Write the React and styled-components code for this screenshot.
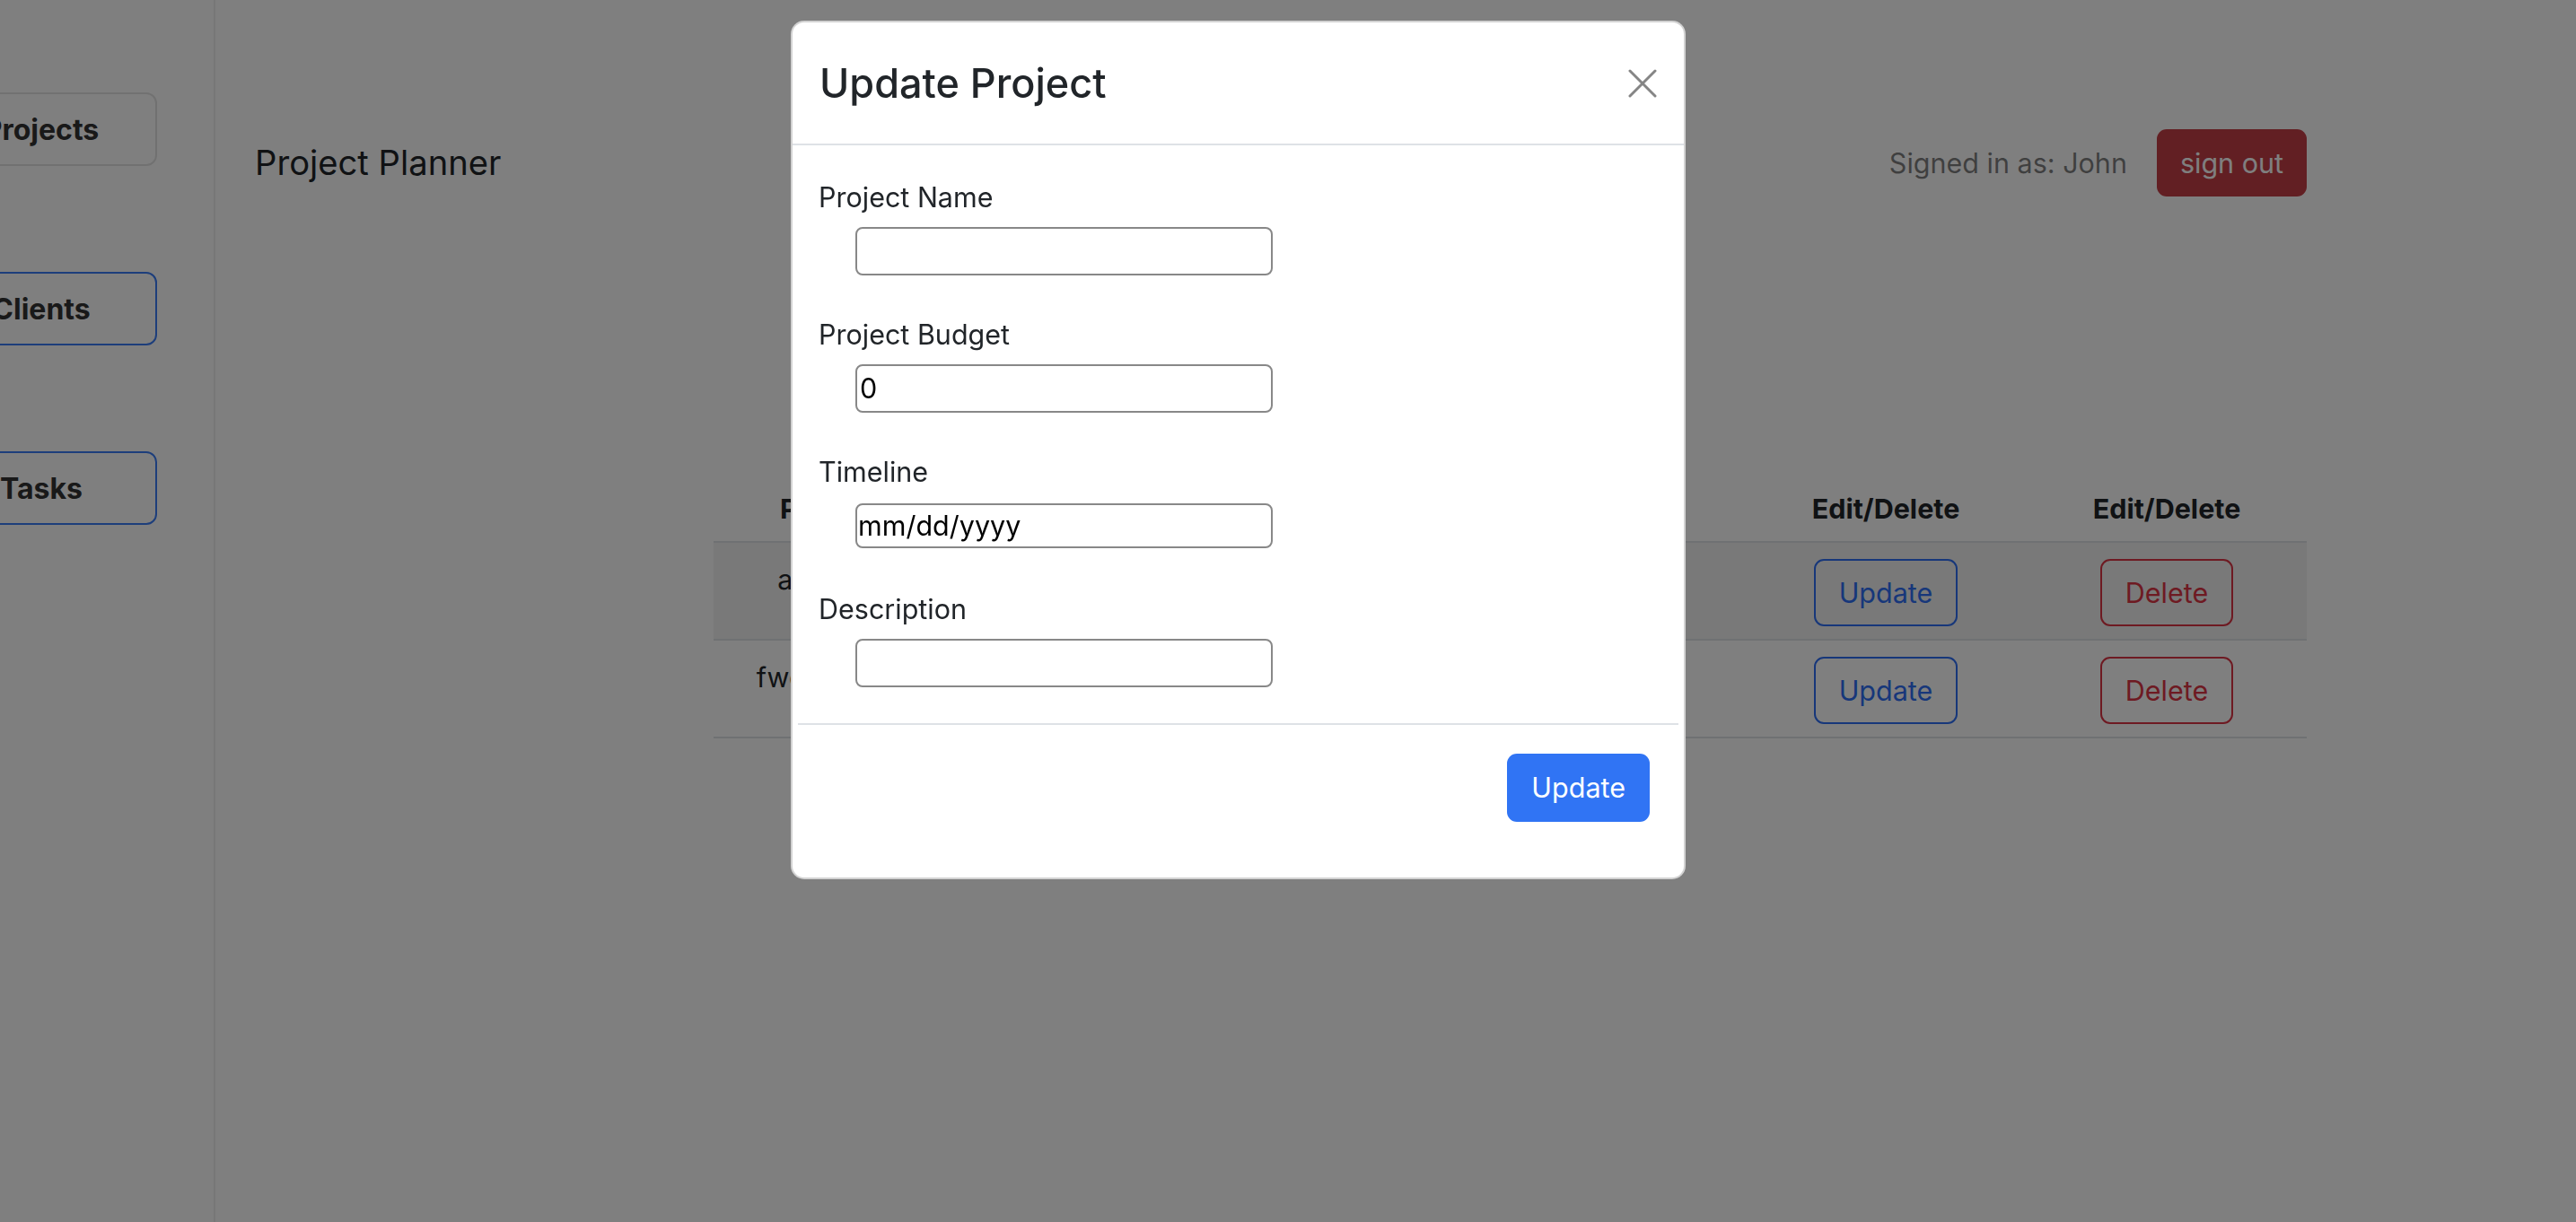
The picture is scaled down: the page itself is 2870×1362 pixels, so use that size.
import React from 'react';
import styled, { createGlobalStyle } from 'styled-components';

const GlobalStyle = createGlobalStyle`
  html, body { margin: 0; padding: 0; }
  body {
    font-family: Inter, "Noto Sans", sans-serif;
    background: #ffffff;
    color: #212529;
    overflow: hidden;
  }
  *, *::before, *::after { box-sizing: border-box; }
`;

const Layout = styled.div`
  display: flex;
  width: 2870px;
  height: 1362px;
  overflow: hidden;
`;

const Sidebar = styled.aside`
  flex: 0 0 240px;
  border-right: 2px solid #efefef;
  display: flex;
  flex-direction: column;
  gap: 118px;
  padding-top: 103px;
`;

const NavButton = styled.button`
  width: 258px;
  height: 82px;
  margin-left: -83px;
  border-radius: 12px;
  background: transparent;
  border: 2px solid ${(p) => (p.$accent ? '#3b7cf7' : '#e3e3e3')};
  font: 700 32px/45px Inter, sans-serif;
  color: #333;
  padding: 0;
`;

const Main = styled.main`
  flex: 1;
  display: flex;
  flex-direction: column;
  padding: 144px 300px 0 44px;
`;

const Navbar = styled.header`
  display: flex;
  align-items: center;
  justify-content: space-between;
`;

const Brand = styled.div`
  font: 400 38.2px/1.5 Inter, sans-serif;
  color: #212529;
`;

const UserArea = styled.div`
  display: flex;
  align-items: center;
  gap: 33px;
`;

const SignedIn = styled.span`
  font: 400 30.5px/45px Inter, sans-serif;
  color: rgba(0, 0, 0, 0.5);
`;

const DangerButton = styled.button`
  height: 75px;
  padding: 0 26px;
  border: none;
  border-radius: 11px;
  background: #c43e46;
  color: #fff;
  font: 400 30.5px/45px Inter, sans-serif;
`;

const Table = styled.div`
  align-self: flex-end;
  width: 1775px;
  margin-top: 309px;
`;

const Row = styled.div`
  display: grid;
  grid-template-columns: 348px 400px 401px 314px 312px;
  border-bottom: 2px solid #dee2e6;
  background: ${(p) => (p.$striped ? 'rgba(0,0,0,0.05)' : 'transparent')};
`;

const Cell = styled.div`
  padding: ${(p) => (p.$head ? '16px 16px 14px' : '18px 16px 14px')};
  text-align: center;
  font: ${(p) => (p.$head ? 700 : 400)} 30.5px/45px Inter, sans-serif;
  color: #212529;
  white-space: nowrap;
`;

const OutlineButton = styled.button`
  height: 75px;
  padding: 0 26px;
  background: transparent;
  border: 2px solid ${(p) => (p.$danger ? '#dc3545' : '#2f6ff5')};
  color: ${(p) => (p.$danger ? '#dc3545' : '#2f6ff5')};
  border-radius: 11px;
  font: 400 30.5px/45px Inter, sans-serif;
`;

const Backdrop = styled.div`
  position: fixed;
  inset: 0;
  background: rgba(0, 0, 0, 0.5);
  z-index: 10;
`;

const Dialog = styled.div`
  position: fixed;
  top: 23px;
  left: 881px;
  width: 997px;
  background: #fff;
  border: 2px solid rgba(0, 0, 0, 0.175);
  border-radius: 15px;
  z-index: 11;
  display: flex;
  flex-direction: column;
`;

const ModalHeader = styled.div`
  display: flex;
  align-items: center;
  justify-content: space-between;
  padding: 42px 30px 40px 30px;
  border-bottom: 2px solid #dee2e6;
`;

const ModalTitle = styled.h4`
  margin: 0;
  font: 500 45px/52.8px Inter, sans-serif;
  color: #212529;
`;

const CloseButton = styled.button`
  width: 32px;
  height: 32px;
  padding: 0;
  border: none;
  background: transparent;
  display: flex;
`;

const ModalBody = styled.form`
  padding: 35px 29px 32px 29px;
  display: flex;
  flex-direction: column;
`;

const FieldGroup = styled.div`
  display: flex;
  flex-direction: column;
  & + & { margin-top: 43px; }
`;

const Label = styled.label`
  font: 400 30.5px/45px Inter, sans-serif;
  color: #212529;
`;

const Input = styled.input`
  margin: ${(p) => (p.$date ? '13px 0 2px 41px' : '11px 0 0 41px')};
  width: 465px;
  height: ${(p) => (p.$date ? 50 : 54)}px;
  border: 2px solid #888;
  border-radius: 8px;
  background: #fff;
  padding: 0 0 0 ${(p) => (p.$date ? 1 : 3)}px;
  font: 400 30.5px Inter, sans-serif;
  color: #000;
  outline: none;
`;

const ModalFooter = styled.div`
  margin: 40px -23px 0;
  border-top: 2px solid #dee2e6;
  padding: 32px 32px 30px;
  display: flex;
  justify-content: flex-end;
`;

const PrimaryButton = styled.button`
  height: 76px;
  padding: 0 27px;
  border: none;
  border-radius: 11px;
  background: #3074f4;
  color: #fff;
  font: 400 30.5px/45px Inter, sans-serif;
`;

const rows = [
  { name: 'asdfasdfasdfa', budget: '1000', timeline: '2023-05-01' },
  { name: 'fwefwefwefwefw', budget: '500', timeline: '2023-06-12' },
];

const CloseIcon = () => (
  <svg width="32" height="32" viewBox="0 0 32 32">
    <path d="M2 2 L30 30 M30 2 L2 30" stroke="#858585" strokeWidth="3" strokeLinecap="round" />
  </svg>
);

export default function App() {
  return (
    <>
      <GlobalStyle />
      <Layout>
        <Sidebar>
          <NavButton>Projects</NavButton>
          <NavButton $accent>Clients</NavButton>
          <NavButton $accent>Tasks</NavButton>
        </Sidebar>
        <Main>
          <Navbar>
            <Brand>Project Planner</Brand>
            <UserArea>
              <SignedIn>Signed in as: John</SignedIn>
              <DangerButton>sign out</DangerButton>
            </UserArea>
          </Navbar>
          <Table>
            <Row>
              <Cell $head>Project Name</Cell>
              <Cell $head>Budget</Cell>
              <Cell $head>Timeline</Cell>
              <Cell $head>Edit/Delete</Cell>
              <Cell $head>Edit/Delete</Cell>
            </Row>
            {rows.map((r, i) => (
              <Row key={i} $striped={i % 2 === 0}>
                <Cell>{r.name}</Cell>
                <Cell>{r.budget}</Cell>
                <Cell>{r.timeline}</Cell>
                <Cell>
                  <OutlineButton>Update</OutlineButton>
                </Cell>
                <Cell>
                  <OutlineButton $danger>Delete</OutlineButton>
                </Cell>
              </Row>
            ))}
          </Table>
        </Main>
      </Layout>
      <Backdrop />
      <Dialog>
        <ModalHeader>
          <ModalTitle>Update Project</ModalTitle>
          <CloseButton aria-label="Close">
            <CloseIcon />
          </CloseButton>
        </ModalHeader>
        <ModalBody onSubmit={(e) => e.preventDefault()}>
          <FieldGroup>
            <Label>Project Name</Label>
            <Input type="text" defaultValue="" />
          </FieldGroup>
          <FieldGroup>
            <Label>Project Budget</Label>
            <Input type="text" defaultValue="0" />
          </FieldGroup>
          <FieldGroup>
            <Label>Timeline</Label>
            <Input type="text" $date defaultValue="mm/dd/yyyy" />
          </FieldGroup>
          <FieldGroup>
            <Label>Description</Label>
            <Input type="text" defaultValue="" />
          </FieldGroup>
          <ModalFooter>
            <PrimaryButton type="submit">Update</PrimaryButton>
          </ModalFooter>
        </ModalBody>
      </Dialog>
    </>
  );
}
